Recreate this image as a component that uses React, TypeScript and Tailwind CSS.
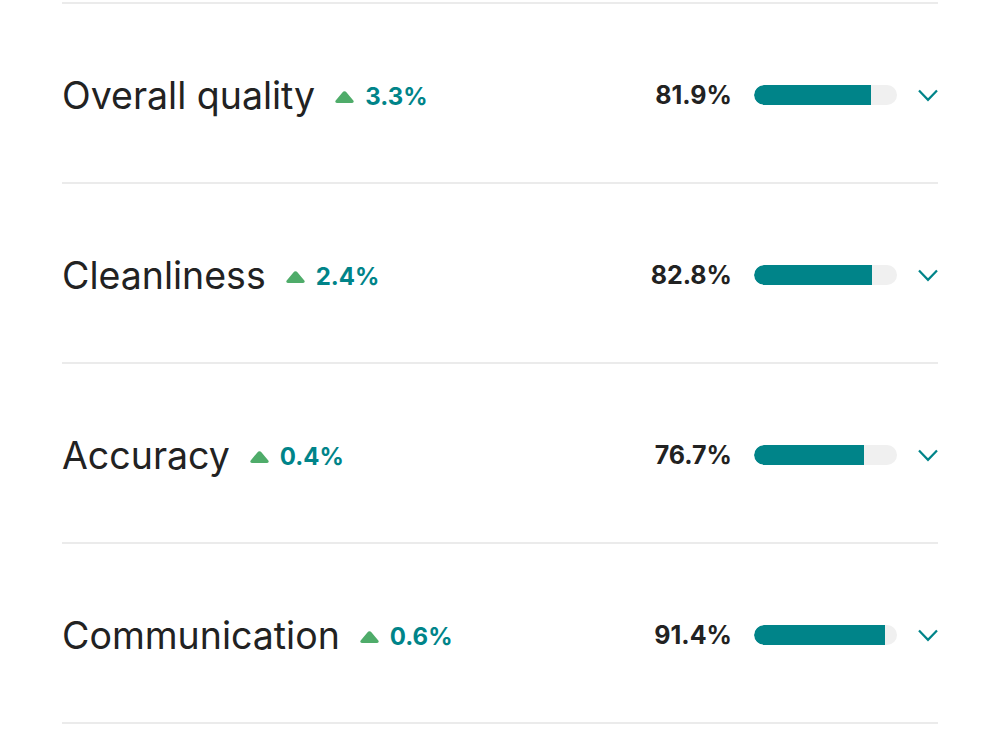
const rows = [
  { name: "Overall quality", change: "3.3%", score: 81.9 },
  { name: "Cleanliness", change: "2.4%", score: 82.8 },
  { name: "Accuracy", change: "0.4%", score: 76.7 },
  { name: "Communication", change: "0.6%", score: 91.4 },
];

function UpArrow() {
  return (
    <svg width="21" height="14" viewBox="0 0 21 14" className="shrink-0">
      <path
        d="M8.6 2.2a2.4 2.4 0 0 1 3.8 0l6.9 8.3c.9 1.1.2 2.5-1.2 2.5H2.9c-1.4 0-2.1-1.4-1.2-2.5z"
        fill="#4fac6a"
      />
    </svg>
  );
}

function Chevron() {
  return (
    <svg width="20" height="13" viewBox="0 0 20 13" fill="none" className="shrink-0">
      <path d="M1 1.5 10 10.8l9-9.3" stroke="#008489" strokeWidth="2.2" />
    </svg>
  );
}

function Row({ name, change, score }: { name: string; change: string; score: number }) {
  return (
    <div className="flex h-[180px] items-center border-b-2 border-[#ebebeb] pt-[4px]">
      <div className="mt-[3px] flex flex-1 items-center">
        <span className="text-[37.5px] text-[#222222]">{name}</span>
        <span className="ml-[19px] flex items-center gap-[10px]">
          <UpArrow />
          <span className="text-[24px] font-bold text-[#008489]">{change}</span>
        </span>
      </div>
      <span className="mt-[2px] text-[25px] font-bold text-[#222222]">{score.toFixed(1)}%</span>
      <div className="ml-[22px] h-[20px] w-[143px] overflow-hidden rounded-full bg-[#f0f0f0]">
        <div className="h-full rounded-l-full bg-[#008489]" style={{ width: `${score}%` }} />
      </div>
      <div className="ml-[21px] flex">
        <Chevron />
      </div>
    </div>
  );
}

export default function App() {
  return (
    <div className="h-[750px] overflow-hidden bg-white px-[62px] pt-[2px]" style={{ fontFamily: "Inter, 'Noto Sans', sans-serif" }}>
      <div className="border-t-2 border-[#ebebeb]">
        {rows.map((r) => (
          <Row key={r.name} {...r} />
        ))}
      </div>
    </div>
  );
}
